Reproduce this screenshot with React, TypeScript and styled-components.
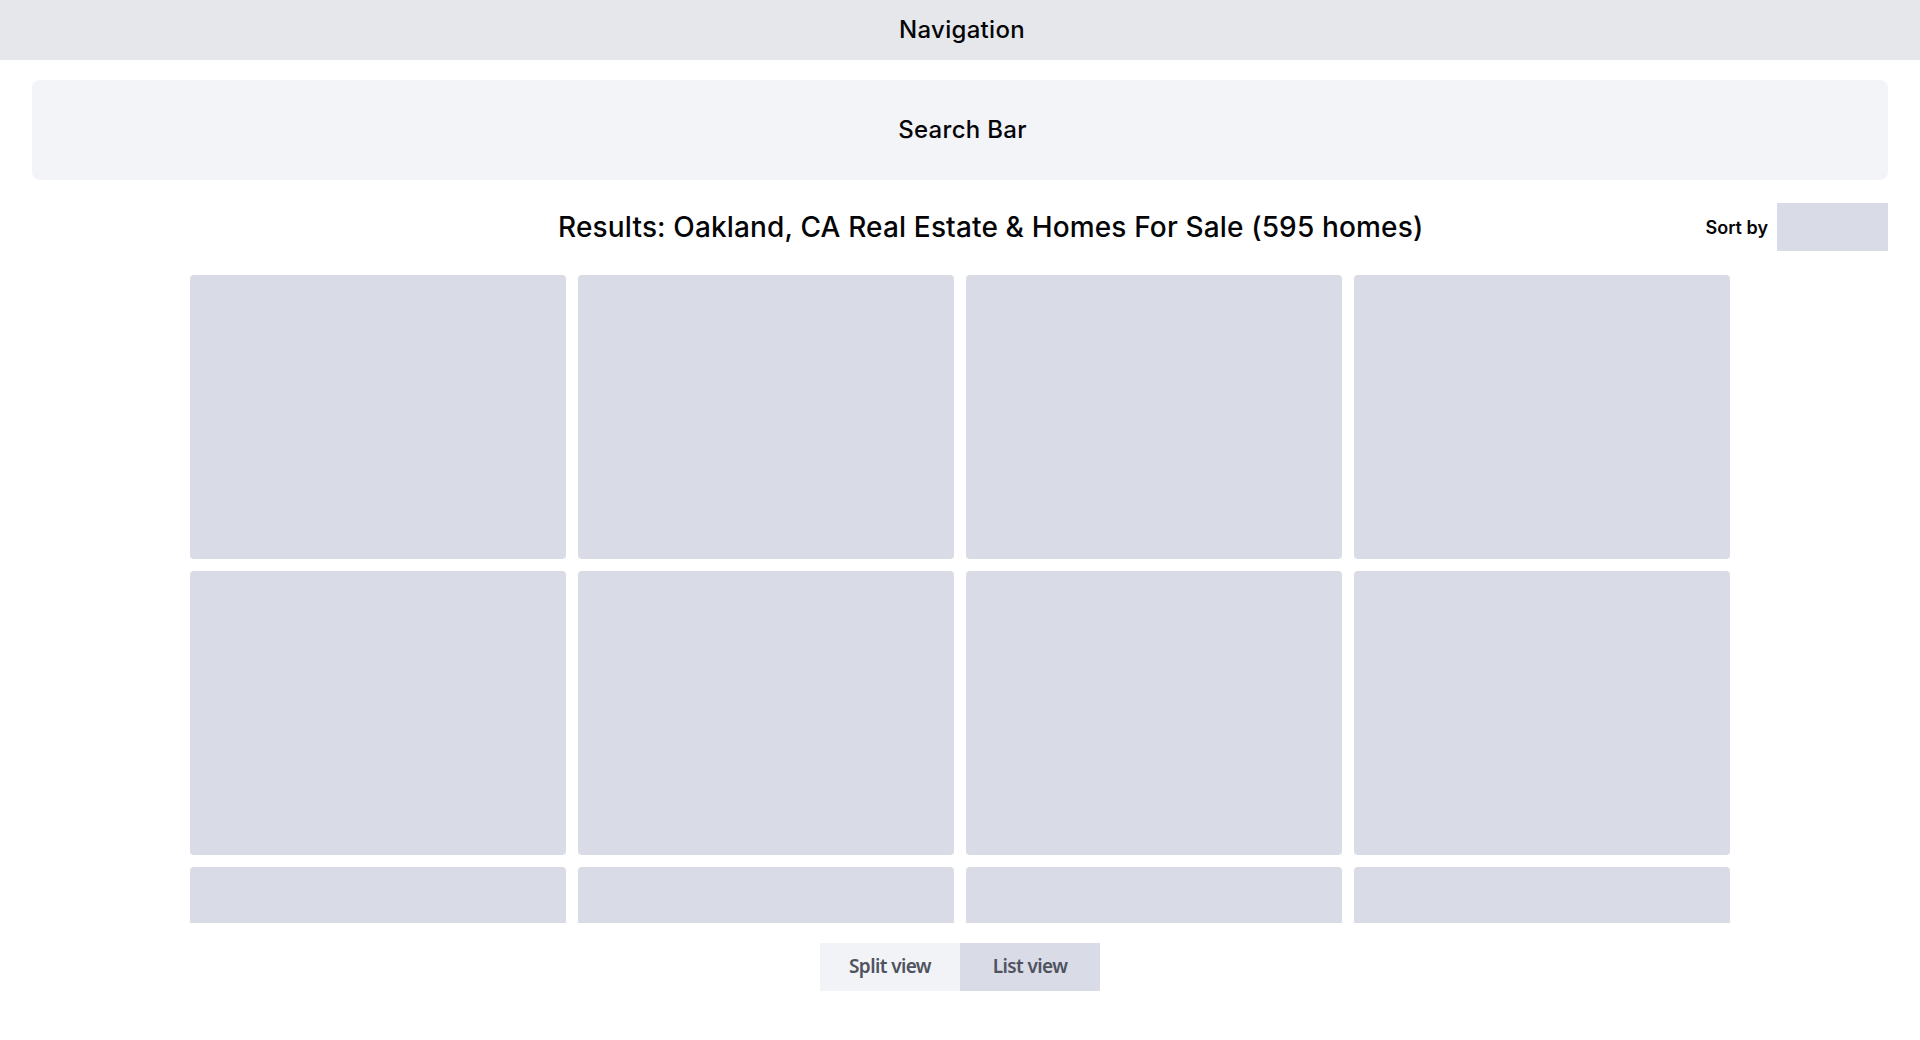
import styled, { createGlobalStyle } from "styled-components";

const GlobalStyle = createGlobalStyle`
  html, body {
    margin: 0;
    padding: 0;
    background: #ffffff;
  }
  body {
    font-family: "Inter", "Liberation Sans", sans-serif;
    color: #050508;
  }
`;

const Page = styled.div`
  display: flex;
  flex-direction: column;
  height: 100vh;
  overflow: hidden;
`;

const NavBar = styled.nav`
  height: 60px;
  flex-shrink: 0;
  display: flex;
  align-items: center;
  justify-content: center;
  padding: 0 0 1px 4px;
  box-sizing: border-box;
  background-color: #e5e7eb;
  font-size: 24px;
  font-weight: 500;
  letter-spacing: 0.3px;
`;

const SearchBar = styled.section`
  margin: 20px 32px 0;
  height: 100px;
  flex-shrink: 0;
  display: flex;
  align-items: center;
  justify-content: center;
  padding: 0 0 2px 5px;
  box-sizing: border-box;
  border-radius: 8px;
  background-color: #f3f4f8;
  font-size: 24px;
  font-weight: 500;
  letter-spacing: 0.3px;
`;

const ResultsHeader = styled.div`
  margin: 23px 32px 0;
  height: 48px;
  flex-shrink: 0;
  display: flex;
  align-items: center;
  gap: 8px;
`;

const Title = styled.h1`
  flex: 1;
  margin: 0;
  padding-left: 252px;
  text-align: center;
  font-size: 28px;
  font-weight: 500;
  letter-spacing: 0.15px;
  white-space: nowrap;
`;

const SortGroup = styled.label`
  display: flex;
  align-items: center;
  gap: 9px;
  font-size: 18px;
  font-weight: 600;
`;

const SortSelect = styled.div`
  width: 111px;
  height: 48px;
  background-color: #d9dbe7;
`;

const ResultsGrid = styled.div`
  margin: 24px auto 0;
  width: 1540px;
  height: 648px;
  flex-shrink: 0;
  display: grid;
  grid-template-columns: repeat(4, 376px);
  grid-auto-rows: 284px;
  gap: 12px;
  overflow-y: auto;
  scrollbar-width: none;

  &::-webkit-scrollbar {
    display: none;
  }
`;

const ListingCard = styled.div`
  border-radius: 4px;
  background-color: #d9dbe7;
`;

const ViewToggle = styled.div`
  margin: 20px auto 0;
  display: flex;
`;

const ToggleButton = styled.button<{ $active?: boolean }>`
  width: 140px;
  height: 48px;
  border: none;
  padding: 0 0 2px;
  background-color: ${(p) => (p.$active ? "#d9dbe7" : "#f2f3f7")};
  color: #4f5360;
  font-family: "Noto Sans", "Open Sans", sans-serif;
  font-size: 19px;
  font-weight: 600;
  letter-spacing: -0.6px;
  cursor: pointer;
`;

const listings = Array.from({ length: 20 }, (_, i) => i);

function App() {
  return (
    <Page>
      <GlobalStyle />
      <NavBar>Navigation</NavBar>
      <SearchBar>Search Bar</SearchBar>
      <ResultsHeader>
        <Title>Results: Oakland, CA Real Estate &amp; Homes For Sale (595 homes)</Title>
        <SortGroup>
          Sort by
          <SortSelect />
        </SortGroup>
      </ResultsHeader>
      <ResultsGrid>
        {listings.map((id) => (
          <ListingCard key={id} />
        ))}
      </ResultsGrid>
      <ViewToggle>
        <ToggleButton>Split view</ToggleButton>
        <ToggleButton $active>List view</ToggleButton>
      </ViewToggle>
    </Page>
  );
}

export default App;
